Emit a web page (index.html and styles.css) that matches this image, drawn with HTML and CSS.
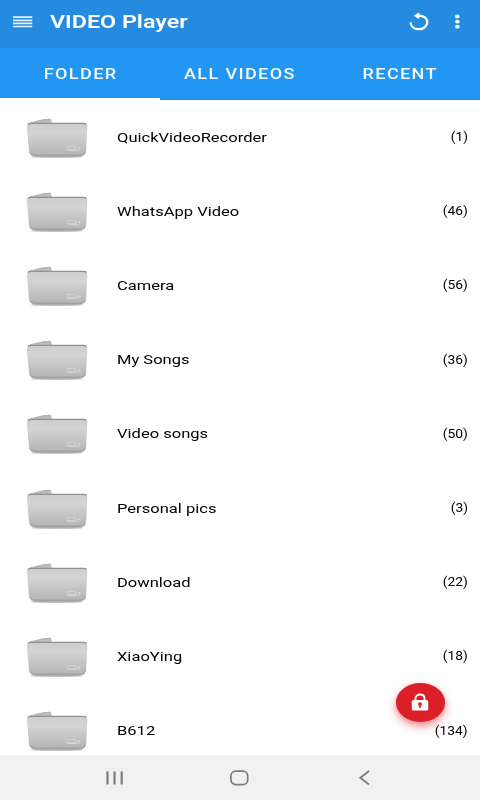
FILE: index.html
```html
<!DOCTYPE html>
<html lang="en">
<head>
<meta charset="utf-8">
<title>VIDEO Player</title>
<link rel="stylesheet" href="styles.css">
</head>
<body>
<svg width="0" height="0" class="defs" aria-hidden="true">
  <defs>
    <linearGradient id="front" x1="0" y1="0" x2="0" y2="1"><stop offset="0" stop-color="#cdcdcd"/><stop offset=".3" stop-color="#d4d4d4"/><stop offset="1" stop-color="#b4b4b4"/></linearGradient>
    <filter id="soft" x="-10%" y="-100%" width="120%" height="300%"><feGaussianBlur stdDeviation=".8"/></filter>
    <symbol id="folder" viewBox="0 0 64 44">
      <path d="M7 37.500Q32 39.500 57 37.500" stroke="#777" stroke-width="2" fill="none" filter="url(#soft)"/>
      <path d="M3.500 8 5 5Q13 2.500 18 1.300L25 .7Q26.500 .8 27 5.500V8Z" fill="#bdbdbd"/>
      <path d="M5 4.700Q15 2.200 25 1.200" stroke="#a9a9a9" stroke-width=".8" stroke-dasharray="2 .6" fill="none"/>
      <path d="M5 5H59Q62.300 5.200 62.300 9L61.200 32Q61 37.500 56.500 37.500H9Q4.500 37.500 4 33L2 10Q1.800 5.200 5 5Z" fill="url(#front)"/>
      <path d="M3 6.500Q4 5.300 6 5.300H58.500Q60.500 5.300 61.500 6.500" stroke="#919191" stroke-width="1.300" fill="none"/>
      <path d="M5 34.500Q6 37.200 9.500 37.200H56Q59.500 37.200 60.500 34" stroke="#999" stroke-width="1" fill="none"/>
      <path d="M42 28.600H50.500V31.600H42ZM50.500 30.200H56M54.500 29V32M42 32.500H54" stroke="#dadada" stroke-width=".7" fill="none"/>
    </symbol>
  </defs>
</svg>
<div class="screen">
  <header class="bar">
    <svg class="menu" width="20" height="12" viewBox="0 0 20 12"><path d="M0 1.200H19.300M0 4.300H19.300M0 7.400H19.300M0 10.500H19.300" stroke="#e4f1fc" stroke-width="1.700"/></svg>
    <h1 class="title">VIDEO Player</h1>
    <svg class="undo" width="20" height="20" viewBox="0 0 20 20"><path d="M1.500 10.300C2 14.300 5.300 17.200 9.800 17.200C14.600 17.200 18.300 14.300 18.300 10.300C18.300 6.300 14.800 3.600 9.800 3.600H7.500" fill="none" stroke="#fff" stroke-width="2.300"/><path d="M4.600 3.800 10.200 .3V7.300Z" fill="#fff"/></svg>
    <svg class="more" width="6" height="16" viewBox="0 0 6 16" fill="#fff"><ellipse cx="3.300" cy="2.500" rx="2.300" ry="1.900"/><ellipse cx="3.300" cy="7.600" rx="2.300" ry="1.900"/><ellipse cx="3.300" cy="12.700" rx="2.300" ry="1.900"/></svg>
  </header>
  <nav class="tabs">
    <div class="tab active"><span>FOLDER</span></div>
    <div class="tab"><span>ALL VIDEOS</span></div>
    <div class="tab"><span>RECENT</span></div>
  </nav>
  <main class="list">
    <div class="row"><svg class="folder"><use href="#folder"/></svg><span class="name">QuickVideoRecorder</span><span class="count">(1)</span></div>
    <div class="row"><svg class="folder"><use href="#folder"/></svg><span class="name">WhatsApp Video</span><span class="count">(46)</span></div>
    <div class="row"><svg class="folder"><use href="#folder"/></svg><span class="name">Camera</span><span class="count">(56)</span></div>
    <div class="row"><svg class="folder"><use href="#folder"/></svg><span class="name">My Songs</span><span class="count">(36)</span></div>
    <div class="row"><svg class="folder"><use href="#folder"/></svg><span class="name">Video songs</span><span class="count">(50)</span></div>
    <div class="row"><svg class="folder"><use href="#folder"/></svg><span class="name">Personal pics</span><span class="count">(3)</span></div>
    <div class="row"><svg class="folder"><use href="#folder"/></svg><span class="name">Download</span><span class="count">(22)</span></div>
    <div class="row"><svg class="folder"><use href="#folder"/></svg><span class="name">XiaoYing</span><span class="count">(18)</span></div>
    <div class="row"><svg class="folder"><use href="#folder"/></svg><span class="name">B612</span><span class="count">(134)</span></div>
  </main>
  <button class="fab" aria-label="Lock">
    <svg width="18" height="18" viewBox="0 0 18 18"><path d="M4.500 8V5.500C4.500 3 6.500 1.500 9 1.500S13.500 3 13.500 5.500V8" fill="none" stroke="#fff" stroke-width="1.800"/><rect x=".8" y="7" width="16.400" height="10.500" rx="1.500" fill="#fff"/><path d="M9 9.600A1.800 1.500 0 0 1 9.800 12.400V14.600H8.200V12.400A1.800 1.500 0 0 1 9 9.600Z" fill="#da1f28" stroke="#da1f28" stroke-width=".6"/></svg>
  </button>
  <footer class="nav">
    <svg class="key" width="20" height="16" viewBox="0 0 20 16"><path d="M2.500 1.500V14.500M9.500 1.500V14.500M16.700 1.500V14.500" stroke="#7d7d7d" stroke-width="2.200"/></svg>
    <svg class="key" width="20" height="16" viewBox="0 0 20 16"><rect x=".9" y="1.200" width="16.800" height="13.400" rx="4.800" fill="none" stroke="#7d7d7d" stroke-width="1.700"/></svg>
    <svg class="key" width="20" height="16" viewBox="0 0 20 16"><path d="M14 1 5.300 7.800 14 14.500" fill="none" stroke="#7d7d7d" stroke-width="1.800"/></svg>
  </footer>
</div>
</body>
</html>
```
FILE: styles.css
```css
* { box-sizing: border-box; }
body { margin: 0; font-family: Roboto, "Liberation Sans", sans-serif; background: #fff; }
.defs { position: absolute; }
.screen { position: relative; width: 480px; height: 800px; overflow: hidden; display: flex; flex-direction: column; }
.bar { height: 48px; flex: none; display: flex; align-items: center; padding: 0 20px 4px 13px; background: #248be0; color: #fff; }
.menu { margin-top: -1px; }
.title { margin: 0 auto 0 17px; font-size: 19px; line-height: 24px; font-weight: 600; white-space: nowrap; transform: scaleX(1.225); transform-origin: left; }
.undo { margin-right: 25px; margin-top: -1px; }
.tabs { height: 52px; flex: none; display: flex; background: #2196f3; color: #f4faff; border-bottom: 1px solid #168cec; }
.tab { position: relative; flex: 1; display: flex; align-items: center; justify-content: center; padding: 2px 0 0 1px; font-size: 14.500px; font-weight: 500; letter-spacing: 1.100px; white-space: nowrap; }
.tab span { transform: scaleX(1.245); }
.tab:last-child { padding-left: 2px; }
.tab.active::after { content: ""; position: absolute; left: 0; right: 0; bottom: -1px; height: 2px; background: #fff; }
.list { flex: 1; min-height: 0; overflow: hidden; background: #fff; }
.row { height: 74.200px; display: flex; align-items: center; padding: 0 12px 0 25px; color: #000; }
.folder { width: 64px; height: 44px; flex: none; margin-top: 5px; }
.name { margin-left: 28px; margin-top: -1px; font-size: 13.500px; white-space: nowrap; transform: scaleX(1.225); transform-origin: left; }
.count { margin-left: auto; font-size: 12px; transform: scaleX(1.15); transform-origin: right; }
.fab { position: absolute; left: 396px; top: 683px; width: 49px; height: 38.500px; padding: 0 1px 0 0; border: 0; border-radius: 50%; background: #da1f28; display: flex; align-items: center; justify-content: center; box-shadow: 0 4px 9px rgba(233, 30, 50, .55); }
.nav { height: 45px; flex: none; display: flex; justify-content: center; align-items: center; gap: 105px; background: #f1f1f1; }
```
